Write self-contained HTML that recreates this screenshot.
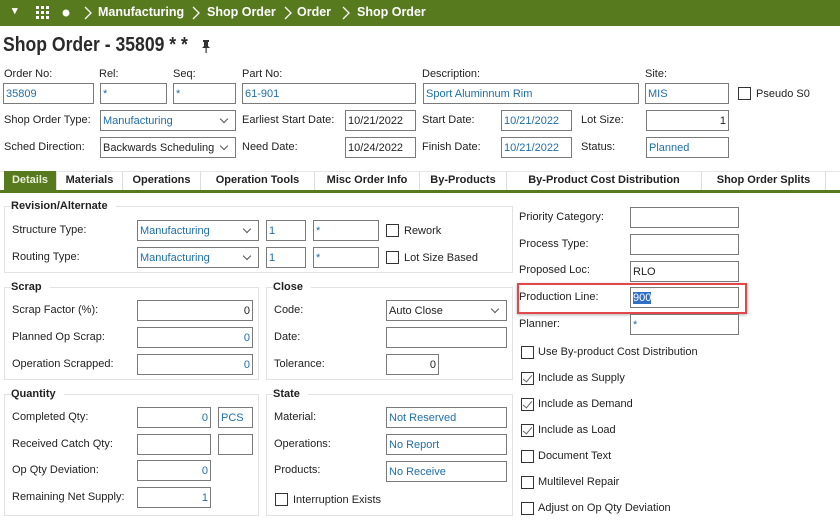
<!DOCTYPE html>
<html><head><meta charset="utf-8"><style>
*{box-sizing:border-box;margin:0;padding:0}
body{width:840px;height:528px;background:#fff;font-family:"Liberation Sans",sans-serif;font-size:11px;color:#222;position:relative;overflow:hidden}
.a{position:absolute;white-space:nowrap}
.bar{position:absolute;left:0;top:0;width:840px;height:26px;background:#577a1e;color:#fff;font-weight:bold;font-size:12.5px}
.bar span{position:absolute;top:5px}
.in{position:absolute;border:1px solid #7a7a7a;background:#fff;height:21px;padding:3px 2px 1px;line-height:15px;font-size:11px;color:#1f6ea8;white-space:nowrap;overflow:hidden}
.r{text-align:right}
.k{color:#222}
.sel::after{content:"";position:absolute;right:8px;top:5px;width:5px;height:5px;border-right:1px solid #555;border-bottom:1px solid #555;transform:rotate(45deg)}
.lb{position:absolute;white-space:nowrap;line-height:13px}
.cb{position:absolute;width:13px;height:13px;border:1px solid #333;background:#fff}
.cb.on::after{content:"";position:absolute;left:3px;top:0px;width:4px;height:8px;border-right:1px solid #666;border-bottom:1px solid #666;transform:rotate(40deg)}
.gb{position:absolute;border:1px solid #e2e2e2}
.gt{position:absolute;font-weight:bold;background:#fff;padding-right:8px;font-size:11px;line-height:13px}
.tab{position:absolute;top:171px;height:19px;border-right:1px solid #ddd;font-weight:bold;font-size:11px;line-height:19px;text-align:center;color:#222}
</style></head><body>
<div class="bar">
<span style="left:12px;top:4px;font-size:11px">▾</span>
<svg class="a" style="left:36px;top:6px" width="14" height="14"><g fill="#fff"><rect x="0" y="0" width="3" height="3"/><rect x="5" y="0" width="3" height="3"/><rect x="10" y="0" width="3" height="3"/><rect x="0" y="5" width="3" height="3"/><rect x="5" y="5" width="3" height="3"/><rect x="10" y="5" width="3" height="3"/><rect x="0" y="10" width="3" height="3"/><rect x="5" y="10" width="3" height="3"/><rect x="10" y="10" width="3" height="3"/></g></svg>
<svg class="a" style="left:62px;top:9px" width="8" height="8"><circle cx="4" cy="4" r="3.5" fill="#fff"/></svg>
<svg class="a" style="left:83px;top:5px" width="10" height="16"><path d="M2 2 L8 8 L2 14" stroke="#fff" fill="none" stroke-width="1.3"/></svg>
<span style="left:98px">Manufacturing</span>
<svg class="a" style="left:191px;top:5px" width="10" height="16"><path d="M2 2 L8 8 L2 14" stroke="#fff" fill="none" stroke-width="1.3"/></svg>
<span style="left:207px">Shop Order</span>
<svg class="a" style="left:283px;top:5px" width="10" height="16"><path d="M2 2 L8 8 L2 14" stroke="#fff" fill="none" stroke-width="1.3"/></svg>
<span style="left:297px">Order</span>
<svg class="a" style="left:341px;top:5px" width="10" height="16"><path d="M2 2 L8 8 L2 14" stroke="#fff" fill="none" stroke-width="1.3"/></svg>
<span style="left:357px">Shop Order</span>
</div>
<div class="a" style="left:3px;top:34px;font-size:20px;font-weight:bold;color:#2a2a2a;transform:scaleX(0.88);transform-origin:left">Shop Order - 35809 * *</div>
<svg class="a" style="left:200px;top:39px" width="12" height="14"><path d="M3 1 H9 V3 H8 V7 L10 9 H2 L4 7 V3 H3 Z" fill="#333"/><rect x="5.5" y="9" width="1.2" height="5" fill="#333"/></svg>

<div class="lb" style="left:4px;top:68px">Order No:</div>
<div class="lb" style="left:99px;top:68px">Rel:</div>
<div class="lb" style="left:173px;top:68px">Seq:</div>
<div class="lb" style="left:242px;top:68px">Part No:</div>
<div class="lb" style="left:422px;top:68px">Description:</div>
<div class="lb" style="left:645px;top:68px">Site:</div>
<div class="in" style="left:3px;top:83px;width:91px">35809</div>
<div class="in" style="left:100px;top:83px;width:67px">*</div>
<div class="in" style="left:173px;top:83px;width:63px">*</div>
<div class="in" style="left:242px;top:83px;width:174px">61-901</div>
<div class="in" style="left:423px;top:83px;width:216px">Sport Aluminnum Rim</div>
<div class="in" style="left:645px;top:83px;width:84px">MIS</div>
<div class="cb" style="left:738px;top:87px"></div>
<div class="lb" style="left:756px;top:88px">Pseudo S0</div>

<div class="lb" style="left:4px;top:114px">Shop Order Type:</div>
<div class="in sel" style="left:100px;top:110px;width:136px">Manufacturing</div>
<div class="lb" style="left:242px;top:114px">Earliest Start Date:</div>
<div class="in k" style="left:345px;top:110px;width:71px">10/21/2022</div>
<div class="lb" style="left:422px;top:114px">Start Date:</div>
<div class="in" style="left:501px;top:110px;width:71px">10/21/2022</div>
<div class="lb" style="left:581px;top:114px">Lot Size:</div>
<div class="in r k" style="left:646px;top:110px;width:83px">1</div>

<div class="lb" style="left:4px;top:141px">Sched Direction:</div>
<div class="in sel k" style="left:100px;top:137px;width:136px">Backwards Scheduling</div>
<div class="lb" style="left:242px;top:141px">Need Date:</div>
<div class="in k" style="left:345px;top:137px;width:71px">10/24/2022</div>
<div class="lb" style="left:422px;top:141px">Finish Date:</div>
<div class="in" style="left:501px;top:137px;width:71px">10/21/2022</div>
<div class="lb" style="left:581px;top:141px">Status:</div>
<div class="in" style="left:646px;top:137px;width:83px">Planned</div>

<div class="a" style="left:0;top:171px;width:840px;height:19px;border-top:1px solid #e6e6e6"></div>
<div class="tab" style="left:4px;width:53px;background:#577a1e;color:#e8efd8">Details</div>
<div class="tab" style="left:57px;width:66px">Materials</div>
<div class="tab" style="left:123px;width:78px">Operations</div>
<div class="tab" style="left:201px;width:114px">Operation Tools</div>
<div class="tab" style="left:315px;width:105px">Misc Order Info</div>
<div class="tab" style="left:420px;width:87px">By-Products</div>
<div class="tab" style="left:507px;width:195px">By-Product Cost Distribution</div>
<div class="tab" style="left:702px;width:124px">Shop Order Splits</div>
<div class="a" style="left:0;top:190px;width:840px;height:3px;background:#577a1e"></div>

<div class="gb" style="left:4px;top:206px;width:509px;height:67px"></div>
<div class="gt" style="left:11px;top:200px">Revision/Alternate</div>
<div class="lb" style="left:12px;top:224px">Structure Type:</div>
<div class="in sel" style="left:137px;top:220px;width:122px">Manufacturing</div>
<div class="in" style="left:266px;top:220px;width:40px">1</div>
<div class="in" style="left:313px;top:220px;width:66px">*</div>
<div class="cb" style="left:386px;top:224px"></div>
<div class="lb" style="left:404px;top:225px">Rework</div>
<div class="lb" style="left:12px;top:251px">Routing Type:</div>
<div class="in sel" style="left:137px;top:247px;width:122px">Manufacturing</div>
<div class="in" style="left:266px;top:247px;width:40px">1</div>
<div class="in" style="left:313px;top:247px;width:66px">*</div>
<div class="cb" style="left:386px;top:251px"></div>
<div class="lb" style="left:404px;top:252px">Lot Size Based</div>

<div class="gb" style="left:4px;top:287px;width:255px;height:93px"></div>
<div class="gt" style="left:11px;top:281px">Scrap</div>
<div class="lb" style="left:12px;top:304px">Scrap Factor (%):</div>
<div class="in r k" style="left:137px;top:300px;width:116px">0</div>
<div class="lb" style="left:12px;top:331px">Planned Op Scrap:</div>
<div class="in r" style="left:137px;top:327px;width:116px">0</div>
<div class="lb" style="left:12px;top:358px">Operation Scrapped:</div>
<div class="in r" style="left:137px;top:354px;width:116px">0</div>

<div class="gb" style="left:266px;top:287px;width:247px;height:93px"></div>
<div class="gt" style="left:273px;top:281px">Close</div>
<div class="lb" style="left:274px;top:304px">Code:</div>
<div class="in sel k" style="left:386px;top:300px;width:121px">Auto Close</div>
<div class="lb" style="left:274px;top:331px">Date:</div>
<div class="in" style="left:386px;top:327px;width:121px"></div>
<div class="lb" style="left:274px;top:358px">Tolerance:</div>
<div class="in r k" style="left:386px;top:354px;width:53px">0</div>

<div class="gb" style="left:4px;top:394px;width:255px;height:122px"></div>
<div class="gt" style="left:11px;top:388px">Quantity</div>
<div class="lb" style="left:12px;top:411px">Completed Qty:</div>
<div class="in r" style="left:137px;top:407px;width:74px">0</div>
<div class="in" style="left:218px;top:407px;width:35px">PCS</div>
<div class="lb" style="left:12px;top:438px">Received Catch Qty:</div>
<div class="in" style="left:137px;top:434px;width:74px"></div>
<div class="in" style="left:218px;top:434px;width:35px"></div>
<div class="lb" style="left:12px;top:464px">Op Qty Deviation:</div>
<div class="in r" style="left:137px;top:460px;width:74px">0</div>
<div class="lb" style="left:12px;top:491px">Remaining Net Supply:</div>
<div class="in r" style="left:137px;top:487px;width:74px">1</div>

<div class="gb" style="left:266px;top:394px;width:247px;height:122px"></div>
<div class="gt" style="left:273px;top:388px">State</div>
<div class="lb" style="left:274px;top:411px">Material:</div>
<div class="in" style="left:386px;top:407px;width:121px">Not Reserved</div>
<div class="lb" style="left:274px;top:438px">Operations:</div>
<div class="in" style="left:386px;top:434px;width:121px">No Report</div>
<div class="lb" style="left:274px;top:464px">Products:</div>
<div class="in" style="left:386px;top:461px;width:121px">No Receive</div>
<div class="cb" style="left:275px;top:493px"></div>
<div class="lb" style="left:293px;top:494px">Interruption Exists</div>

<div class="lb" style="left:519px;top:211px">Priority Category:</div>
<div class="in" style="left:630px;top:207px;width:109px"></div>
<div class="lb" style="left:519px;top:238px">Process Type:</div>
<div class="in" style="left:630px;top:234px;width:109px"></div>
<div class="lb" style="left:519px;top:264px">Proposed Loc:</div>
<div class="in k" style="left:630px;top:261px;width:109px">RLO</div>
<div class="lb" style="left:519px;top:291px">Production Line:</div>
<div class="in k" style="left:630px;top:287px;width:109px"><span style="background:#2f6fc7;color:#fff">900</span></div>
<div class="a" style="left:517px;top:283px;width:230px;height:31px;border:2px solid #e0484a;box-shadow:0 1px 3px rgba(0,0,0,.3)"></div>
<div class="lb" style="left:519px;top:318px">Planner:</div>
<div class="in" style="left:630px;top:314px;width:109px">*</div>

<div class="cb" style="left:521px;top:346px"></div><div class="lb" style="left:538px;top:346px">Use By-product Cost Distribution</div>
<div class="cb on" style="left:521px;top:372px"></div><div class="lb" style="left:538px;top:372px">Include as Supply</div>
<div class="cb on" style="left:521px;top:398px"></div><div class="lb" style="left:538px;top:398px">Include as Demand</div>
<div class="cb on" style="left:521px;top:424px"></div><div class="lb" style="left:538px;top:424px">Include as Load</div>
<div class="cb" style="left:521px;top:450px"></div><div class="lb" style="left:538px;top:450px">Document Text</div>
<div class="cb" style="left:521px;top:476px"></div><div class="lb" style="left:538px;top:476px">Multilevel Repair</div>
<div class="cb" style="left:521px;top:502px"></div><div class="lb" style="left:538px;top:502px">Adjust on Op Qty Deviation</div>
</body></html>
